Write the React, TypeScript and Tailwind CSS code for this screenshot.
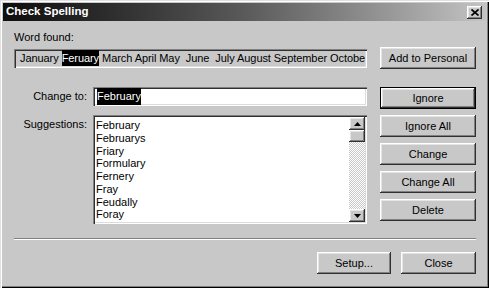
import type { ReactNode } from 'react';

const raised =
  'shadow-[inset_-1px_-1px_0_#303030,inset_1px_1px_0_#ffffff,inset_-2px_-2px_0_#808080,inset_2px_2px_0_#e4e4e4]';
const sunken =
  'shadow-[inset_1px_1px_0_#808080,inset_2px_2px_0_#303030,inset_-1px_-1px_0_#ffffff,inset_-2px_-2px_0_#dcdcdc]';

const suggestions = ['February', 'Februarys', 'Friary', 'Formulary', 'Fernery', 'Fray', 'Feudally', 'Foray'];

function Button({ children, width, isDefault }: { children: ReactNode; width: string; isDefault?: boolean }) {
  return (
    <div
      className={[
        'flex items-center justify-center h-[22px] bg-[#c8c8c8] text-[11px]',
        width,
        isDefault ? 'border border-black' : '',
        raised,
      ].join(' ')}
    >
      {children}
    </div>
  );
}

function Arrow({ down }: { down?: boolean }) {
  return (
    <div className={`h-[13px] w-[16px] flex items-center justify-center bg-[#c8c8c8] ${raised}`}>
      <svg width="7" height="4" viewBox="0 0 7 4">
        {down ? <polygon points="0,0 7,0 3.5,4" fill="#000" /> : <polygon points="0,4 7,4 3.5,0" fill="#000" />}
      </svg>
    </div>
  );
}

function ScrollBar() {
  return (
    <div className="flex flex-col w-[16px] h-full">
      <Arrow />
      <div className={`h-[12px] w-[16px] bg-[#c8c8c8] ${raised}`} />
      <div className="flex-1 bg-[repeating-conic-gradient(#ffffff_0%_25%,#c8c8c8_0%_50%)] bg-size-[2px_2px]" />
      <Arrow down />
    </div>
  );
}

export default function App() {
  return (
    <div
      className="relative w-[489px] h-[288px] bg-[#c8c8c8] pt-[3px] px-[3px] text-black font-['Liberation_Sans',Arial,sans-serif] shadow-[inset_1px_1px_0_#e0e0e0,inset_2px_2px_0_#ffffff,inset_-1px_-1px_0_#000000,inset_-2px_-2px_0_#808080]"
    >
      {/* Title bar */}
      <div className="h-[18px] flex items-center justify-between pl-[3px] pr-[4px] bg-gradient-to-r from-[#0e0e0e] via-[#5a5a5a] to-[#c4c4c4]">
        <span className="text-white font-bold text-[11.5px] leading-none">Check Spelling</span>
        <div className={`w-[15px] h-[13px] flex items-center justify-center bg-[#c8c8c8] ${raised}`}>
          <svg width="8" height="7" viewBox="0 0 8 7">
            <path d="M0.5 0.5 L7.5 6.5 M7.5 0.5 L0.5 6.5" stroke="#000" strokeWidth="1.7" />
          </svg>
        </div>
      </div>

      <div className="pl-[11px] pr-[10px] text-[11px]">
        <div className="mt-[9px] h-[14px] leading-[14px]">Word found:</div>

        <div className="mt-[3px] flex items-center justify-between">
          <div className={`w-[353px] h-[19px] flex items-center pl-[6px] whitespace-pre tracking-[-0.07px] ${sunken}`}>
            <span>January </span>
            <span className="bg-black text-white">Feruary</span>
            <span> March April May  June  July August September Octobe</span>
          </div>
          <Button width="w-[96px]">Add to Personal</Button>
        </div>

        <div className="mt-[18px] flex items-start justify-between">
          <div className="flex items-center">
            <div className="w-[73px] text-right">Change to:</div>
            <div className={`ml-[6px] w-[274px] h-[19px] bg-white flex items-center pl-[4px] ${sunken}`}>
              <span className="bg-black text-white">February</span>
            </div>
          </div>
          <Button width="w-[96px]" isDefault>
            Ignore
          </Button>
        </div>

        <div className="mt-[6px] flex items-start justify-between">
          <div className="flex items-start">
            <div className="w-[73px] text-right mt-[1px]">Suggestions:</div>
            <div className={`ml-[6px] w-[274px] h-[109px] bg-white flex p-[2px] ${sunken}`}>
              <div className="flex-1 pl-[1px] pt-[2px] leading-[12.75px]">
                {suggestions.map((s) => (
                  <div key={s}>{s}</div>
                ))}
              </div>
              <ScrollBar />
            </div>
          </div>
          <div className="flex flex-col gap-[6px]">
            <Button width="w-[96px]">Ignore All</Button>
            <Button width="w-[96px]">Change</Button>
            <Button width="w-[96px]">Change All</Button>
            <Button width="w-[96px]">Delete</Button>
          </div>
        </div>

        <div className="mt-[14px] border-t border-t-[#808080] border-b border-b-white" />

        <div className="mt-[12px] flex justify-end gap-[10px]">
          <Button width="w-[74px]">Setup...</Button>
          <Button width="w-[75px]">Close</Button>
        </div>
      </div>
    </div>
  );
}
